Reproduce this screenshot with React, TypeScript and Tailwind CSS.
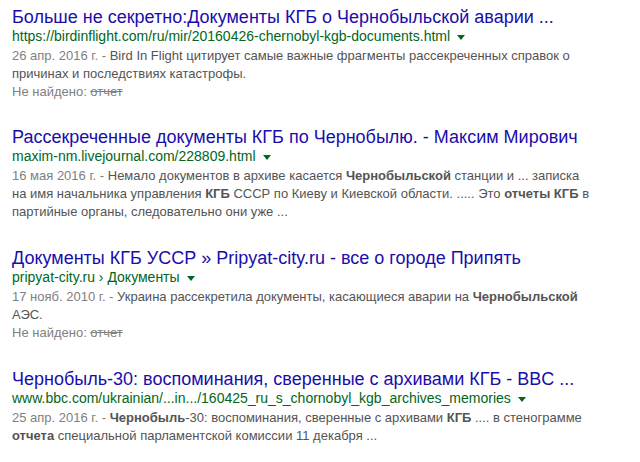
import React from "react";

type Part = string | { b: string };

type Result = {
  title: string;
  url: string;
  date: string;
  lines: Part[][];
  missing?: boolean;
};

const results: Result[] = [
  {
    title: "Больше не секретно:Документы КГБ о Чернобыльской аварии ...",
    url: "https://birdinflight.com/ru/mir/20160426-chernobyl-kgb-documents.html",
    date: "26 апр. 2016 г. - ",
    lines: [
      ["Bird In Flight цитирует самые важные фрагменты рассекреченных справок о"],
      ["причинах и последствиях катастрофы."],
    ],
    missing: true,
  },
  {
    title: "Рассекреченные документы КГБ по Чернобылю. - Максим Мирович",
    url: "maxim-nm.livejournal.com/228809.html",
    date: "16 мая 2016 г. - ",
    lines: [
      ["Немало документов в архиве касается ", { b: "Чернобыльской" }, " станции и ... записка"],
      [
        "на имя начальника управления ",
        { b: "КГБ" },
        " СССР по Киеву и Киевской области. ..... Это ",
        { b: "отчеты КГБ" },
        " в",
      ],
      ["партийные органы, следовательно они уже ..."],
    ],
  },
  {
    title: "Документы КГБ УССР » Pripyat-city.ru - все о городе Припять",
    url: "pripyat-city.ru › Документы",
    date: "17 нояб. 2010 г. - ",
    lines: [
      ["Украина рассекретила документы, касающиеся аварии на ", { b: "Чернобыльской" }],
      ["АЭС."],
    ],
    missing: true,
  },
  {
    title: "Чернобыль-30: воспоминания, сверенные с архивами КГБ - BBC ...",
    url: "www.bbc.com/ukrainian/...in.../160425_ru_s_chornobyl_kgb_archives_memories",
    date: "25 апр. 2016 г. - ",
    lines: [
      [{ b: "Чернобыль" }, "-30: воспоминания, сверенные с архивами ", { b: "КГБ" }, " .... в стенограмме"],
      [{ b: "отчета" }, " специальной парламентской комиссии 11 декабря ..."],
    ],
  },
];

const font = { fontFamily: '"Liberation Sans", Arial, sans-serif' };

export default function App() {
  return (
    <div
      className="w-[640px] h-[462px] bg-white overflow-hidden pl-[12px] pt-[6px]"
      style={font}
    >
      <div className="flex flex-col gap-[25px] w-[620px]">
        {results.map((r, idx) => (
          <div
            key={r.title}
            className={idx === 1 || idx === 2 ? "flex flex-col mb-[1px]" : "flex flex-col"}
          >
            <a className="text-[18px] leading-[22px] text-[#1a0dab] whitespace-nowrap">
              {r.title}
            </a>
            <div className="flex items-center text-[14px] leading-[17px] text-[#006621] whitespace-nowrap">
              <span>{r.url}</span>
              <span className="ml-[7px] w-0 h-0 border-l-[4px] border-r-[4px] border-t-[5px] border-l-transparent border-r-transparent border-t-[#006621] mt-[2px]" />
            </div>
            <div className="flex flex-col text-[13px] leading-[18px] text-[#545454] mt-[2px] whitespace-pre">
              {r.lines.map((line, li) => (
                <div key={li}>
                  {li === 0 && <span className="text-[#808080]">{r.date}</span>}
                  {line.map((p, i) =>
                    typeof p === "string" ? (
                      <span key={i}>{p}</span>
                    ) : (
                      <b key={i} className="font-bold text-[#545454]">
                        {p.b}
                      </b>
                    )
                  )}
                </div>
              ))}
            </div>
            {r.missing && (
              <div className="text-[13px] leading-[18px] text-[#808080]">
                Не найдено: <s>отчет</s>
              </div>
            )}
          </div>
        ))}
      </div>
    </div>
  );
}
